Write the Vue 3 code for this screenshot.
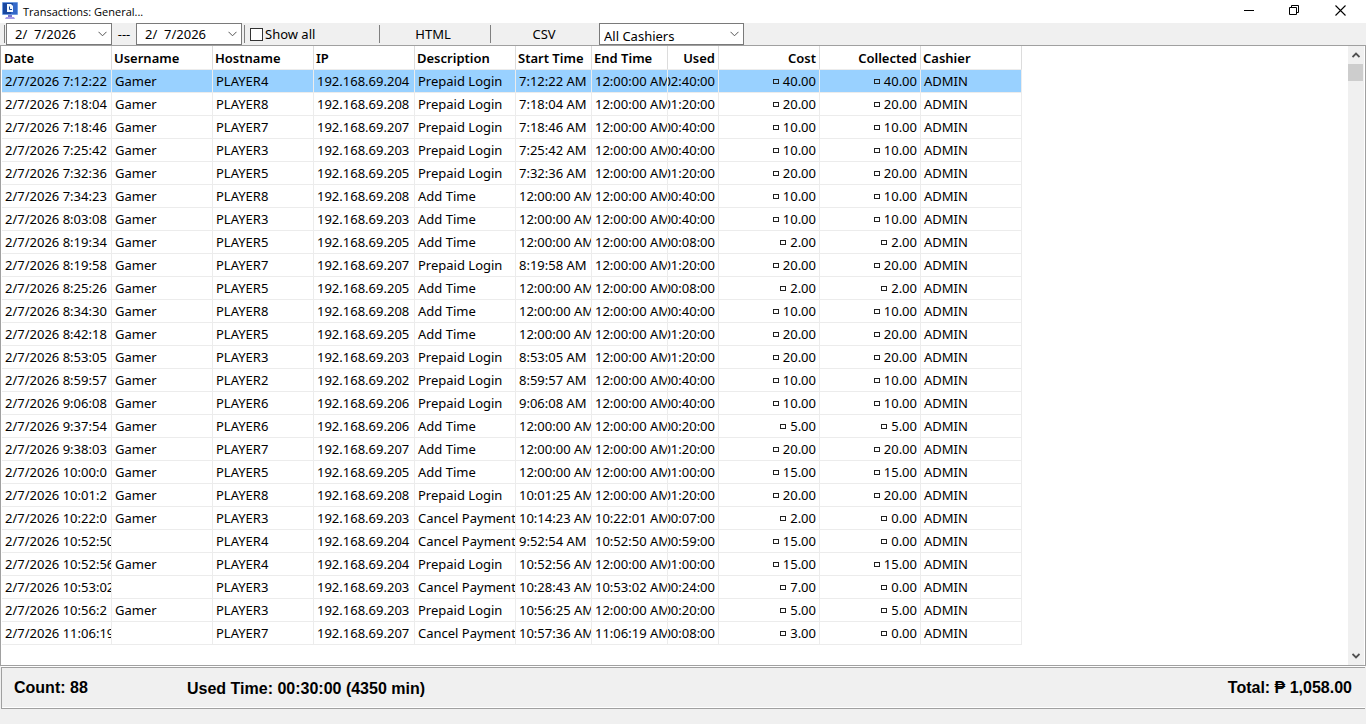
<script setup>
import { ref } from 'vue'

const fromDate = ref('2/  7/2026')
const toDate = ref('2/  7/2026')
const showAll = ref(false)
const cashier = ref('All Cashiers')
const selected = ref(0)

const columns = [
  { label: 'Date', cls: 'c-date' },
  { label: 'Username', cls: 'c-wide' },
  { label: 'Hostname', cls: 'c-wide' },
  { label: 'IP', cls: 'c-wide' },
  { label: 'Description', cls: 'c-wide' },
  { label: 'Start Time', cls: 'c-time' },
  { label: 'End Time', cls: 'c-time' },
  { label: 'Used', cls: 'c-used', right: true },
  { label: 'Cost', cls: 'c-wide', right: true },
  { label: 'Collected', cls: 'c-wide', right: true },
  { label: 'Cashier', cls: 'c-wide' },
]

const P = 'Prepaid Login'
const A = 'Add Time'
const C = 'Cancel Payment'
const M = '12:00:00 AM'

const source = [
  ['7:12:22', 'Gamer', 4, P, '7:12:22 AM', M, '02:40:00', '40.00', '40.00'],
  ['7:18:04', 'Gamer', 8, P, '7:18:04 AM', M, '01:20:00', '20.00', '20.00'],
  ['7:18:46', 'Gamer', 7, P, '7:18:46 AM', M, '00:40:00', '10.00', '10.00'],
  ['7:25:42', 'Gamer', 3, P, '7:25:42 AM', M, '00:40:00', '10.00', '10.00'],
  ['7:32:36', 'Gamer', 5, P, '7:32:36 AM', M, '01:20:00', '20.00', '20.00'],
  ['7:34:23', 'Gamer', 8, A, M, M, '00:40:00', '10.00', '10.00'],
  ['8:03:08', 'Gamer', 3, A, M, M, '00:40:00', '10.00', '10.00'],
  ['8:19:34', 'Gamer', 5, A, M, M, '00:08:00', '2.00', '2.00'],
  ['8:19:58', 'Gamer', 7, P, '8:19:58 AM', M, '01:20:00', '20.00', '20.00'],
  ['8:25:26', 'Gamer', 5, A, M, M, '00:08:00', '2.00', '2.00'],
  ['8:34:30', 'Gamer', 8, A, M, M, '00:40:00', '10.00', '10.00'],
  ['8:42:18', 'Gamer', 5, A, M, M, '01:20:00', '20.00', '20.00'],
  ['8:53:05', 'Gamer', 3, P, '8:53:05 AM', M, '01:20:00', '20.00', '20.00'],
  ['8:59:57', 'Gamer', 2, P, '8:59:57 AM', M, '00:40:00', '10.00', '10.00'],
  ['9:06:08', 'Gamer', 6, P, '9:06:08 AM', M, '00:40:00', '10.00', '10.00'],
  ['9:37:54', 'Gamer', 6, A, M, M, '00:20:00', '5.00', '5.00'],
  ['9:38:03', 'Gamer', 7, A, M, M, '01:20:00', '20.00', '20.00'],
  ['10:00:0', 'Gamer', 5, A, M, M, '01:00:00', '15.00', '15.00'],
  ['10:01:2', 'Gamer', 8, P, '10:01:25 AM', M, '01:20:00', '20.00', '20.00'],
  ['10:22:0', 'Gamer', 3, C, '10:14:23 AM', '10:22:01 AM', '00:07:00', '2.00', '0.00'],
  ['10:52:50', '', 4, C, '9:52:54 AM', '10:52:50 AM', '00:59:00', '15.00', '0.00'],
  ['10:52:56', 'Gamer', 4, P, '10:52:56 AM', M, '01:00:00', '15.00', '15.00'],
  ['10:53:02', '', 3, C, '10:28:43 AM', '10:53:02 AM', '00:24:00', '7.00', '0.00'],
  ['10:56:2', 'Gamer', 3, P, '10:56:25 AM', M, '00:20:00', '5.00', '5.00'],
  ['11:06:19', '', 7, C, '10:57:36 AM', '11:06:19 AM', '00:08:00', '3.00', '0.00'],
]

const rows = source.map(([t, user, n, desc, start, end, used, cost, got]) => [
  '2/7/2026 ' + t, user, 'PLAYER' + n, '192.168.69.20' + n, desc, start, end, used, cost, got, 'ADMIN',
])
</script>

<template>
  <div class="window">
    <header class="titlebar">
      <svg class="app-icon" width="16" height="17" viewBox="0 0 16 17" aria-hidden="true">
        <rect x="0" y="0" width="16" height="13" rx="1" fill="#6f9be0" />
        <rect x="1" y="1" width="14" height="11" fill="#1747a0" />
        <path d="M11 1h4v11H9z" fill="#3468c8" />
        <path d="M5 2h4l2 2v6H5z" fill="#f4f9ff" />
        <path d="M7.500 4.500v3H10" fill="none" stroke="#174a9c" />
        <path d="M6 13h4v2H6z" fill="#7771cc" />
        <path d="M4 15h8l1 2H3z" fill="#a49be8" />
      </svg>
      <h1>Transactions: General...</h1>
      <div class="controls">
        <button type="button" aria-label="Minimize">
          <svg width="12" height="11" viewBox="0 0 12 11"><path d="M1 5.500h10" stroke="#000" /></svg>
        </button>
        <button type="button" aria-label="Restore">
          <svg width="12" height="11" viewBox="0 0 12 11" fill="none" stroke="#000">
            <path d="M.5 2.500h7v7h-7zM2.500 2.500v-2h7v7h-2" />
          </svg>
        </button>
        <button type="button" aria-label="Close">
          <svg width="12" height="11" viewBox="0 0 12 11"><path d="M.5.5l10 10M10.500.5l-10 10" stroke="#000" stroke-width="1.100" /></svg>
        </button>
      </div>
    </header>

    <div class="toolbar">
      <span class="grip"></span>
      <div class="picker">
        <input v-model="fromDate" type="text" aria-label="From date" />
        <button type="button" aria-label="Open from calendar">
          <svg width="9" height="6" viewBox="0 0 9 6"><path d="M.5.8l4 4 4-4" fill="none" stroke="#555" /></svg>
        </button>
      </div>
      <span class="dash">---</span>
      <div class="picker">
        <input v-model="toDate" type="text" aria-label="To date" />
        <button type="button" aria-label="Open to calendar">
          <svg width="9" height="6" viewBox="0 0 9 6"><path d="M.5.8l4 4 4-4" fill="none" stroke="#555" /></svg>
        </button>
      </div>
      <span class="sep first"></span>
      <label class="check"><input v-model="showAll" type="checkbox" />Show all</label>
      <span class="sep"></span>
      <button type="button" class="tool">HTML</button>
      <span class="sep"></span>
      <button type="button" class="tool">CSV</button>
      <div class="combo">
        <select v-model="cashier" aria-label="Cashier">
          <option>All Cashiers</option>
        </select>
        <svg width="9" height="6" viewBox="0 0 9 6"><path d="M.5.8l4 4 4-4" fill="none" stroke="#555" /></svg>
      </div>
    </div>

    <main class="list">
      <div class="grid">
        <table>
          <colgroup>
            <col v-for="c in columns" :key="c.label" :class="c.cls" />
          </colgroup>
          <thead>
            <tr>
              <th v-for="c in columns" :key="c.label" scope="col">
                <div :class="{ right: c.right }">{{ c.label }}</div>
              </th>
            </tr>
          </thead>
          <tbody>
            <tr v-for="(r, i) in rows" :key="i" :class="{ active: i === selected }" @click="selected = i">
              <td v-for="(v, j) in r" :key="j">
                <div :class="{ right: columns[j].right }">
                  <i v-if="j === 8 || j === 9" class="coin"></i><span>{{ v }}</span>
                </div>
              </td>
            </tr>
          </tbody>
        </table>
      </div>
      <div class="scrollbar">
        <button type="button" aria-label="Scroll up">
          <svg width="8" height="6" viewBox="0 0 8 6"><path d="M.5 5L4 1.500 7.500 5" fill="none" stroke="#505050" stroke-width="1.800" /></svg>
        </button>
        <span class="thumb"></span>
        <button type="button" class="down" aria-label="Scroll down">
          <svg width="8" height="6" viewBox="0 0 8 6"><path d="M.5 1L4 4.500 7.500 1" fill="none" stroke="#505050" stroke-width="1.800" /></svg>
        </button>
      </div>
    </main>

    <footer class="summary">
      <span class="count">Count: 88</span>
      <span class="used">Used Time: 00:30:00 (4350 min)</span>
      <span class="total">Total: ₱ 1,058.00</span>
    </footer>
    <div class="status"></div>
  </div>
</template>

<style>
body {
  background: #f0f0f0;
}
</style>

<style scoped>
.window {
  display: flex;
  flex-direction: column;
  height: 100vh;
  overflow: hidden;
  background: #f0f0f0;
  color: #000;
  font: 13px/20px "Noto Sans", "Open Sans", sans-serif;
}
.window * {
  box-sizing: border-box;
}
button,
input,
select {
  margin: 0;
  padding: 0;
  border: 0;
  border-radius: 0;
  background: none;
  color: inherit;
  font: inherit;
}
svg {
  display: block;
}
.titlebar {
  display: flex;
  align-items: center;
  flex: none;
  height: 23px;
  padding: 0 2px 2px;
  background: #fff;
}
h1 {
  margin: 2px 0 0 5px;
  font: 11px/20px "Open Sans", "Noto Sans", sans-serif;
}
.controls {
  display: flex;
  margin-left: auto;
}
.controls button {
  display: grid;
  place-items: center;
  width: 46px;
  height: 21px;
}
.toolbar {
  display: flex;
  align-items: center;
  flex: none;
  height: 23px;
  border-bottom: 1px solid #a0a0a0;
}
.grip {
  width: 1px;
  height: 18px;
  margin: 0 1px 0 4px;
  background: #808080;
}
.picker {
  display: flex;
  width: 106px;
  height: 22px;
  border: 1px solid #7a7a7a;
  background: #fff;
}
.picker input {
  width: 86px;
  padding-left: 8px;
  white-space: pre;
}
.picker button {
  display: grid;
  place-items: center;
  width: 18px;
}
.dash {
  width: 24px;
  text-align: center;
}
.sep {
  width: 1px;
  height: 18px;
  background: #808080;
}
.sep.first {
  margin: 0 5px 0 2px;
}
.check {
  display: flex;
  align-items: center;
  gap: 2px;
  width: 129px;
}
.check input {
  appearance: none;
  width: 13px;
  height: 13px;
  border: 1px solid #333;
  background: #fff;
}
.check input:checked {
  background: #0078d7;
}
.tool {
  width: 110px;
  height: 22px;
  padding-right: 4px;
}
.combo {
  display: flex;
  align-items: center;
  position: relative;
  width: 145px;
  height: 22px;
  margin-right: auto;
  border: 1px solid #7a7a7a;
  background: #fff;
}
.tool + .combo {
  margin-left: -2px;
}
.combo select {
  appearance: none;
  width: 100%;
  height: 20px;
  padding: 2px 0 0 4px;
}
.combo svg {
  position: absolute;
  right: 4px;
  pointer-events: none;
}
.list {
  display: flex;
  flex: 1;
  min-height: 0;
  padding-right: 1px;
  border: solid #a0a0a0;
  border-width: 0 1px 1px;
  background: #fff;
}
.grid {
  flex: 1;
  overflow: hidden;
  padding-left: 1px;
}
table {
  width: 1020px;
  table-layout: fixed;
  border-collapse: separate;
  border-spacing: 0;
}
.c-date {
  width: 110px;
}
.c-wide {
  width: 101px;
}
.c-time {
  width: 76px;
}
.c-used {
  width: 51px;
}
th,
td {
  height: 23px;
  padding: 0;
  border: solid #ececec;
  border-width: 0 1px 1px 0;
  font-weight: 400;
  text-align: left;
}
th {
  height: 24px;
  border-right-color: #dcdcdc;
  font-weight: 600;
}
th div,
td div {
  display: flex;
  align-items: center;
  height: 22px;
  padding: 0 0 0 3px;
  overflow: hidden;
  white-space: nowrap;
}
th div {
  padding-left: 2px;
}
div.right {
  justify-content: flex-end;
  padding: 0 3px 0 0;
}
.active td {
  background: #99d1ff;
}
.coin {
  width: 6px;
  height: 5px;
  margin-right: 4px;
  border: 1px solid #222;
}
.scrollbar {
  display: flex;
  flex-direction: column;
  width: 16px;
  background: #f0f0f0;
}
.scrollbar button {
  display: grid;
  place-items: center;
  height: 18px;
}
.thumb {
  height: 17px;
  margin-right: 1px;
  background: #cdcdcd;
}
.scrollbar .down {
  margin-top: auto;
}
.summary {
  display: flex;
  align-items: center;
  flex: none;
  height: 42px;
  margin: 1px 1px 0;
  padding: 0 13px 0 12px;
  border: solid #a0a0a0;
  border-width: 1px 0 1px 1px;
  box-shadow: 0 -1px #fff, inset 0 -1px #fff;
  font: bold 16px/20px "Liberation Sans", Arial, sans-serif;
}
.count {
  width: 173px;
}
.used {
  padding-top: 2px;
}
.total {
  margin-left: auto;
}
.status {
  flex: none;
  height: 15px;
}
</style>
